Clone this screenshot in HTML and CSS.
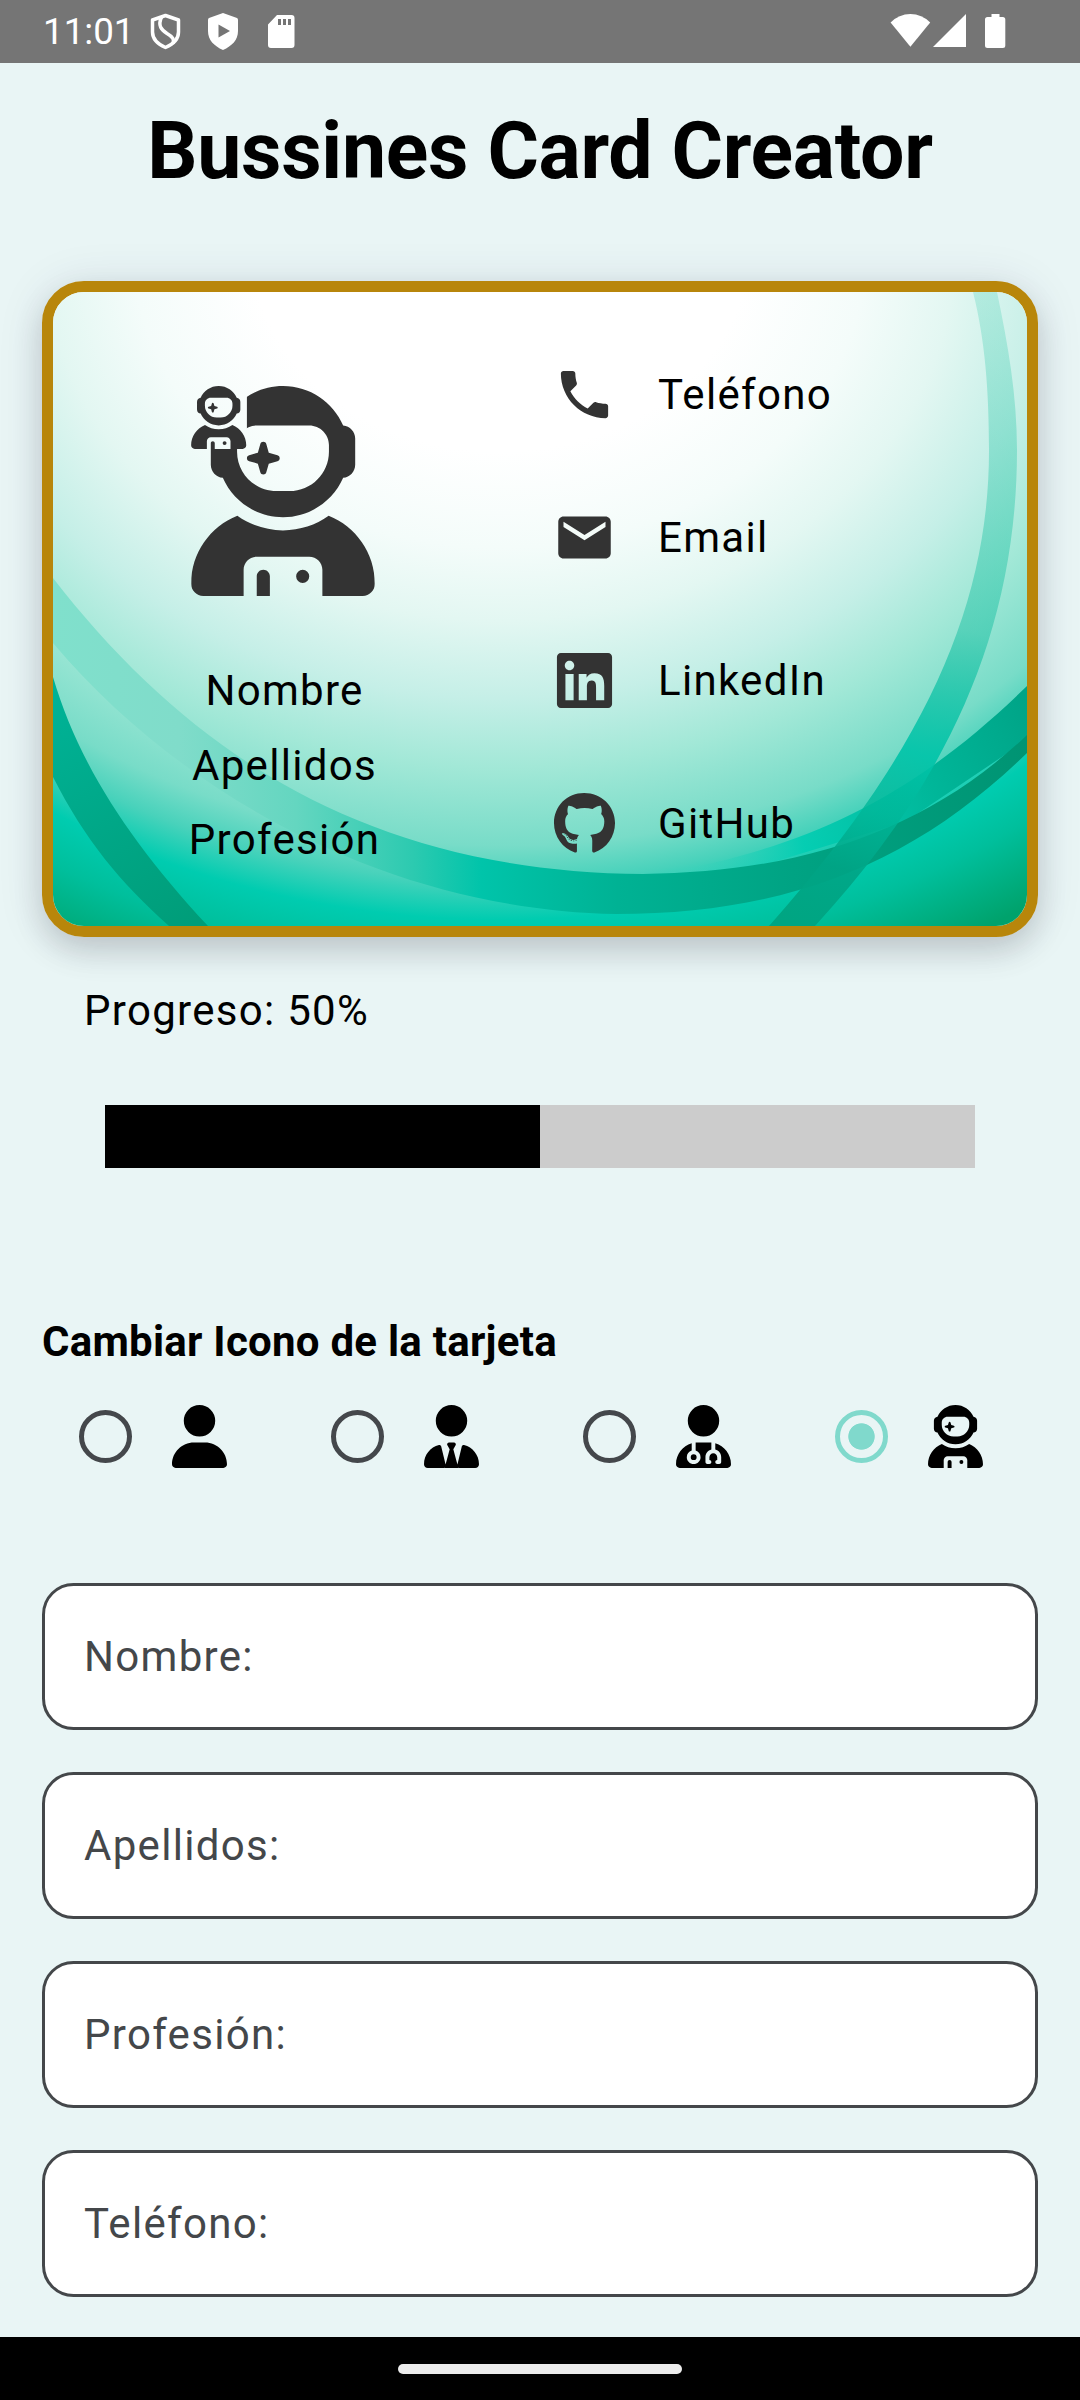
FILE: index.html
```html
<!DOCTYPE html>
<html lang="es">
<head>
<meta charset="utf-8">
<title>Bussines Card Creator</title>
<link rel="stylesheet" href="styles.css">
</head>
<body>
<svg class="defs" width="0" height="0" aria-hidden="true">
  <defs>
    <path id="astronaut" d="M370.7 96.1C346.1 39.5 289.7 0 224 0S101.9 39.5 77.3 96.1C60.9 97.5 48 111.2 48 128v64c0 16.8 12.9 30.5 29.3 31.9C101.9 280.5 158.3 320 224 320s122.1-39.5 146.7-96.1c16.4-1.4 29.3-15.1 29.3-31.9V128c0-16.8-12.9-30.5-29.3-31.9zM336 144v16c0 53-43 96-96 96H208c-53 0-96-43-96-96V144c0-26.5 21.5-48 48-48H288c26.5 0 48 21.5 48 48zM189.3 162.7l-6-21.2c-.9-3.3-3.9-5.5-7.3-5.5s-6.4 2.2-7.3 5.5l-6 21.2-21.2 6c-3.3 .9-5.5 3.9-5.5 7.3s2.2 6.4 5.5 7.3l21.2 6 6 21.2c.9 3.3 3.9 5.5 7.3 5.5s6.4-2.2 7.3-5.5l6-21.2 21.2-6c3.3-.9 5.5-3.9 5.5-7.3s-2.2-6.4-5.5-7.3l-21.2-6zM112.7 316.5C46.7 342.6 0 407 0 482.3C0 498.7 13.3 512 29.7 512H128V448c0-17.7 14.3-32 32-32H288c17.7 0 32 14.3 32 32v64l98.3 0c16.4 0 29.7-13.3 29.7-29.7c0-75.3-46.7-139.7-112.7-165.8C303.9 338.8 265.5 352 224 352s-79.9-13.2-111.3-35.5zM176 448c-8.8 0-16 7.2-16 16v48h32V464c0-8.8-7.2-16-16-16zm96 32a16 16 0 1 0 0-32 16 16 0 1 0 0 32z"/>
    <clipPath id="avatar-clip"><path d="M136 0H448V512H0V153.6H136z"/></clipPath>
  </defs>
</svg>

<header class="status">
  <span class="clock">11:01</span>
  <svg class="status-left" viewBox="150 0 150 63" width="150" height="63">
    <path d="M165.500 15.500L178.500 20v12c0 7-5 12-13 15.500c-8-3.500-13-8.500-13-15.500V20z" fill="none" stroke="#fff" stroke-width="3.500" stroke-linejoin="round"/>
    <path d="M161.500 17c-4 9 0 13 5.500 16.500c6 3.500 7.500 6 6 10" fill="none" stroke="#fff" stroke-width="3.500"/>
    <path fill="#fff" fill-rule="evenodd" d="M223 13l14 5q1 .4 1 2v11c0 9-6 15-15 19c-9-4-15-10-15-19V20q0-1.600 1-2zM218.500 24.500v13l11.500-6.500z"/>
    <path fill="#fff" fill-rule="evenodd" d="M277 15h14.500q3 0 3 3v27q0 3-3 3H271q-3 0-3-3V24.500zM278 19v6h3v-6zM283 19v6h3v-6zM288 19v6h3v-6z"/>
  </svg>
  <svg class="status-right" viewBox="890 0 117 63" width="117" height="63" fill="#fff">
    <path d="M910.400 46.700L890.600 22.500Q899 14 910.400 14T930.200 22.500z"/>
    <path d="M966 14V47H933z"/>
    <path d="M991.500 14h8v3h3.300q2.500 0 2.500 2.500v26q0 2.500-2.500 2.500h-15.300q-2.500 0-2.500-2.500v-26q0-2.500 2.500-2.500h4z"/>
  </svg>
</header>

<main class="screen">
  <h1 class="title">Bussines Card Creator</h1>

  <section class="card">
    <svg class="card-art" viewBox="53 292 974 634" preserveAspectRatio="none">
      <defs>
        <radialGradient id="base" gradientUnits="userSpaceOnUse" cx="0" cy="0" r="1" gradientTransform="translate(500 250) scale(989 805)">
          <stop offset="0" stop-color="#fff"/>
          <stop offset=".25" stop-color="#fff"/>
          <stop offset=".37" stop-color="#f4fcfa"/>
          <stop offset=".46" stop-color="#e3f7f2"/>
          <stop offset=".557" stop-color="#c5efe7"/>
          <stop offset=".643" stop-color="#a2e8d7"/>
          <stop offset=".74" stop-color="#78dcc8"/>
          <stop offset=".785" stop-color="#48d2bb"/>
          <stop offset=".832" stop-color="#00ccb0"/>
          <stop offset=".887" stop-color="#00bf9c"/>
          <stop offset=".974" stop-color="#00a26c"/>
        </radialGradient>
        <linearGradient id="ring" gradientUnits="userSpaceOnUse" x1="990" y1="292" x2="800" y2="926">
          <stop offset="0" stop-color="#00be96" stop-opacity=".18"/>
          <stop offset=".5" stop-color="#00b898" stop-opacity=".42"/>
          <stop offset=".7" stop-color="#00c4a9" stop-opacity=".92"/>
          <stop offset=".8" stop-color="#00b799" stop-opacity=".8"/>
          <stop offset=".9" stop-color="#00a485" stop-opacity=".9"/>
          <stop offset="1" stop-color="#00a582"/>
        </linearGradient>
        <linearGradient id="smile" gradientUnits="userSpaceOnUse" x1="53" y1="0" x2="1027" y2="0">
          <stop offset="0" stop-color="#80e0cc"/>
          <stop offset=".13" stop-color="#80dcca"/>
          <stop offset=".25" stop-color="#64d6c0"/>
          <stop offset=".37" stop-color="#2ccab0"/>
          <stop offset=".44" stop-color="#00c4aa"/>
          <stop offset=".58" stop-color="#00b294"/>
          <stop offset=".76" stop-color="#00a383"/>
          <stop offset="1" stop-color="#009473"/>
        </linearGradient>
        <linearGradient id="swoosh" gradientUnits="userSpaceOnUse" x1="660" y1="870" x2="1027" y2="700">
          <stop offset="0" stop-color="#4fd3bd" stop-opacity="0"/>
          <stop offset=".35" stop-color="#00cdb2" stop-opacity=".9"/>
          <stop offset=".7" stop-color="#00b699"/>
          <stop offset="1" stop-color="#00a487"/>
        </linearGradient>
        <linearGradient id="corner" gradientUnits="userSpaceOnUse" x1="53" y1="700" x2="190" y2="926">
          <stop offset="0" stop-color="#00b296"/>
          <stop offset="1" stop-color="#009d79"/>
        </linearGradient>
      </defs>
      <rect x="53" y="292" width="974" height="634" fill="url(#base)"/>
      <path fill="url(#swoosh)" d="M660 874C800 848 905 805 1027 686V740L905 822L747 870z"/>
      <path fill="url(#smile)" d="M53 578C190 755 370 872 643 874C800 872 925 832 1027 735V753C915 862 790 914 616 914C400 910 190 805 53 643z"/>
      <path fill="url(#ring)" d="M973 292C985 340 989 390 989 450C989 600 930 745 769 926H815C940 790 1017 640 1017 450C1017 395 1008 345 997 292z"/>
      <path fill="url(#corner)" d="M53 677C78 762 128 840 208 926H169C120 882 85 840 53 777z"/>
    </svg>
    <div class="person">
      <svg class="avatar" viewBox="0 0 448 512">
        <use href="#astronaut" clip-path="url(#avatar-clip)"/>
        <use href="#astronaut" transform="scale(.3)"/>
      </svg>
      <p class="person-line">Nombre</p>
      <p class="person-line">Apellidos</p>
      <p class="person-line">Profesión</p>
    </div>
    <ul class="contacts">
      <li class="contact">
        <svg class="contact-icon" viewBox="0 0 24 24"><path d="M6.620 10.790c1.440 2.830 3.760 5.140 6.590 6.590l2.200-2.200c.27-.27.67-.36 1.020-.24 1.120.37 2.330.57 3.570.57.55 0 1 .45 1 1V20c0 .55-.45 1-1 1-9.390 0-17-7.610-17-17 0-.55.45-1 1-1h3.500c.55 0 1 .45 1 1 0 1.250.2 2.450.57 3.570.11.35.03.74-.25 1.020l-2.200 2.200z"/></svg>
        <span>Teléfono</span>
      </li>
      <li class="contact">
        <svg class="contact-icon" viewBox="0 0 24 24"><path d="M20 4H4c-1.100 0-1.990.9-1.990 2L2 18c0 1.100.9 2 2 2h16c1.100 0 2-.9 2-2V6c0-1.100-.9-2-2-2z"/><path class="envelope-flap" d="M20 8l-8 5-8-5V6l8 5 8-5z"/></svg>
        <span>Email</span>
      </li>
      <li class="contact">
        <svg class="contact-icon" viewBox="0 0 448 512"><path d="M416 32H31.9C14.3 32 0 46.5 0 64.3v383.400C0 465.500 14.300 480 31.900 480H416c17.600 0 32-14.500 32-32.300V64.300c0-17.800-14.400-32.300-32-32.300zM135.400 416H69V202.200h66.500V416zm-33.200-243c-21.300 0-38.500-17.300-38.500-38.500S80.900 96 102.200 96c21.200 0 38.500 17.300 38.500 38.500 0 21.300-17.200 38.500-38.500 38.500zm282.100 243h-66.400V312c0-24.800-.5-56.700-34.500-56.700-34.600 0-39.900 27-39.900 54.900V416h-66.400V202.200h63.700v29.200h.9c8.900-16.800 30.600-34.500 62.900-34.500 67.200 0 79.700 44.300 79.700 101.900V416z"/></svg>
        <span>LinkedIn</span>
      </li>
      <li class="contact">
        <svg class="contact-icon" viewBox="0 0 496 512"><path d="M165.900 397.400c0 2-2.300 3.600-5.200 3.600-3.300.3-5.600-1.300-5.600-3.600 0-2 2.300-3.600 5.200-3.600 3-.3 5.600 1.300 5.600 3.600zm-31.100-4.500c-.7 2 1.300 4.300 4.300 4.900 2.600 1 5.600 0 6.200-2s-1.300-4.300-4.300-5.200c-2.600-.7-5.500.3-6.200 2.300zm44.200-1.700c-2.900.7-4.900 2.600-4.600 4.900.3 2 2.900 3.300 5.900 2.600 2.900-.7 4.900-2.600 4.600-4.600-.3-1.900-3-3.200-5.900-2.900zM244.800 8C106.100 8 0 113.300 0 252c0 110.900 69.800 205.800 169.500 239.200 12.800 2.300 17.300-5.600 17.300-12.100 0-6.200-.3-40.400-.3-61.400 0 0-70 15-84.700-29.800 0 0-11.400-29.100-27.800-36.600 0 0-22.900-15.700 1.600-15.400 0 0 24.900 2 38.600 25.800 21.900 38.600 58.600 27.500 72.900 20.900 2.300-16 8.800-27.100 16-33.700-55.900-6.200-112.300-14.300-112.300-110.500 0-27.500 7.600-41.300 23.600-58.900-2.600-6.500-11.100-33.300 2.600-67.900 20.900-6.500 69 27 69 27 20-5.600 41.500-8.500 62.800-8.500s42.800 2.900 62.800 8.500c0 0 48.100-33.600 69-27 13.700 34.700 5.200 61.400 2.600 67.900 16 17.700 25.800 31.500 25.800 58.900 0 96.500-58.900 104.200-114.800 110.500 9.200 7.900 17 22.900 17 46.400 0 33.700-.3 75.400-.3 83.600 0 6.500 4.600 14.400 17.300 12.100C428.200 457.800 496 362.900 496 252 496 113.300 383.500 8 244.800 8zM97.200 352.900c-1.300 1-1 3.300.7 5.200 1.600 1.600 3.900 2.300 5.200 1 1.300-1 1-3.300-.7-5.200-1.600-1.600-3.900-2.300-5.200-1zm-10.800-8.100c-.7 1.300.3 2.900 2.300 3.900 1.600 1 3.600.7 4.300-.7.7-1.300-.3-2.900-2.300-3.900-2-.6-3.600-.3-4.300.7zm32.400 35.600c-1.600 1.300-1 4.300 1.300 6.200 2.300 2.300 5.200 2.600 6.500 1 1.300-1.300.7-4.300-1.300-6.200-2.200-2.300-5.200-2.600-6.500-1zm-11.400-14.700c-1.600 1-1.600 3.600 0 5.900 1.600 2.300 4.300 3.300 5.600 2.300 1.600-1.300 1.600-3.900 0-6.200-1.400-2.300-4-3.300-5.600-2z"/></svg>
        <span>GitHub</span>
      </li>
    </ul>
  </section>

  <p class="progress-label">Progreso: 50%</p>
  <div class="progress"><div class="progress-fill" style="width:50%"></div></div>

  <h2 class="subtitle">Cambiar Icono de la tarjeta</h2>
  <div class="icon-options">
    <div class="option">
      <span class="radio"></span>
      <svg class="option-icon" viewBox="0 0 448 512"><path d="M224 256A128 128 0 1 0 224 0a128 128 0 1 0 0 256zm-45.700 48C79.800 304 0 383.800 0 482.300C0 498.700 13.300 512 29.700 512H418.300c16.400 0 29.700-13.300 29.700-29.700C448 383.800 368.200 304 269.700 304H178.300z"/></svg>
    </div>
    <div class="option">
      <span class="radio"></span>
      <svg class="option-icon" viewBox="0 0 448 512"><path d="M224 256A128 128 0 1 1 224 0a128 128 0 1 1 0 256zM209.100 359.200l-18.600-31c-6.400-10.700 1.300-24.200 13.700-24.200H224h19.700c12.400 0 20.100 13.600 13.700 24.200l-18.600 31 33.400 123.900 36-146.900c2-8.100 9.800-13.400 17.900-11.300c70.100 17.600 121.900 81 121.900 156.400c0 17-13.800 30.700-30.700 30.700H285.500c-2.100 0-4-.4-5.800-1.100l.3 1.100H168l.3-1.100c-1.800 .7-3.800 1.100-5.800 1.100H30.700C13.800 512 0 498.200 0 481.300c0-75.500 51.900-138.900 121.900-156.400c8.100-2 15.900 3.300 17.900 11.300l36 146.900 33.400-123.900z"/></svg>
    </div>
    <div class="option">
      <span class="radio"></span>
      <svg class="option-icon" viewBox="0 0 448 512"><path d="M224 256A128 128 0 1 0 224 0a128 128 0 1 0 0 256zm-96 55.200C54 332.900 0 401.300 0 482.300C0 498.700 13.300 512 29.700 512H418.300c16.400 0 29.700-13.300 29.700-29.700c0-81-54-149.400-128-171.100V362c27.600 7.100 48 32.200 48 62v40c0 8.800-7.200 16-16 16H336c-8.800 0-16-7.200-16-16s7.200-16 16-16V424c0-17.700-14.300-32-32-32s-32 14.300-32 32v24c8.800 0 16 7.200 16 16s-7.200 16-16 16H256c-8.800 0-16-7.200-16-16V424c0-29.800 20.400-54.900 48-62V304.900c-6-.6-12.100-.9-18.300-.9H178.300c-6.200 0-12.300 .3-18.300 .9v65.400c23.100 6.900 40 28.300 40 53.700c0 30.900-25.100 56-56 56s-56-25.100-56-56c0-25.400 16.900-46.800 40-53.700V311.200zM144 448a24 24 0 1 0 0-48 24 24 0 1 0 0 48z"/></svg>
    </div>
    <div class="option">
      <span class="radio radio-on"></span>
      <svg class="option-icon" viewBox="0 0 448 512"><use href="#astronaut"/></svg>
    </div>
  </div>

  <form class="fields">
    <div class="field">Nombre:</div>
    <div class="field">Apellidos:</div>
    <div class="field">Profesión:</div>
    <div class="field">Teléfono:</div>
  </form>
</main>

<footer class="navbar"><span class="pill"></span></footer>
</body>
</html>
```
FILE: styles.css
```css
* { box-sizing: border-box; margin: 0; padding: 0; }

body {
  width: 1080px;
  height: 2400px;
  display: flex;
  flex-direction: column;
  overflow: hidden;
  background: #e9f5f5;
  color: #000;
  font: 400 42px/60px Roboto, sans-serif;
  letter-spacing: 1.3px;
}

.defs { position: absolute; }
svg { display: block; }

.status {
  height: 63px;
  flex: none;
  display: flex;
  align-items: center;
  padding: 0 73px 0 43px;
  background: #757575;
  color: #fff;
}
.clock { width: 107px; font-size: 36.75px; line-height: 63px; letter-spacing: 0; white-space: nowrap; }
.status-right { margin-left: auto; }

.screen { flex: 1; padding: 42px 42px 0; }

.title {
  height: 92px;
  font-size: 78.75px;
  line-height: 92px;
  font-weight: 700;
  letter-spacing: -.3px;
  text-align: center;
  white-space: nowrap;
}

.card {
  position: relative;
  display: flex;
  height: 656px;
  margin-top: 84px;
  border: 11px solid #b8860b;
  border-radius: 42px;
  isolation: isolate;
  box-shadow: 0 14px 30px rgba(0, 0, 0, .14), 0 4px 48px rgba(50, 40, 90, .11);
}
.card-art {
  position: absolute;
  inset: 0;
  z-index: -1;
  width: 100%;
  height: 100%;
  border-radius: 31px;
}
.person {
  width: 460px;
  padding-top: 94px;
  display: flex;
  flex-direction: column;
  align-items: center;
}
.avatar { width: 184px; height: 210px; margin-bottom: 58px; fill: #333; }
.person-line { line-height: 74.500px; padding-left: 3px; }

.contacts {
  list-style: none;
  padding: 71px 0 0 40px;
  display: flex;
  flex-direction: column;
  gap: 80px;
}
.contact { display: flex; align-items: center; gap: 42px; height: 63px; }
.contact-icon { width: 63px; height: 63px; fill: #333; }
.envelope-flap { fill: #f4fcf9; }

.progress-label { margin-top: 44px; padding-left: 42px; }
.progress { height: 63px; margin: 64px 63px 0; background: #ccc; }
.progress-fill { height: 100%; background: #000; }

.subtitle { margin-top: 144px; font-size: 42px; line-height: 60px; font-weight: 700; letter-spacing: .25px; }

.icon-options { display: flex; margin-top: 33px; padding-left: 37px; }
.option { flex: none; width: 252px; display: flex; align-items: center; gap: 40px; }
.option-icon { width: 55px; height: 63px; }
.radio {
  width: 53px;
  height: 53px;
  border: 5.250px solid #44474b;
  border-radius: 50%;
}
.radio-on {
  border-color: #80d9cc;
  background: radial-gradient(circle, #80d9cc 12.800px, transparent 13.600px);
}

.fields { display: grid; gap: 42px; margin-top: 115px; }
.field {
  height: 147px;
  display: flex;
  align-items: center;
  padding: 0 39px;
  border: 3px solid #44474a;
  border-radius: 31.500px;
  background: #fff;
  color: #44474a;
}

.navbar {
  height: 63px;
  flex: none;
  display: flex;
  align-items: center;
  justify-content: center;
  padding-top: 1px;
  background: #000;
}
.pill { width: 284px; height: 10px; border-radius: 5px; background: #ececec; }
```
